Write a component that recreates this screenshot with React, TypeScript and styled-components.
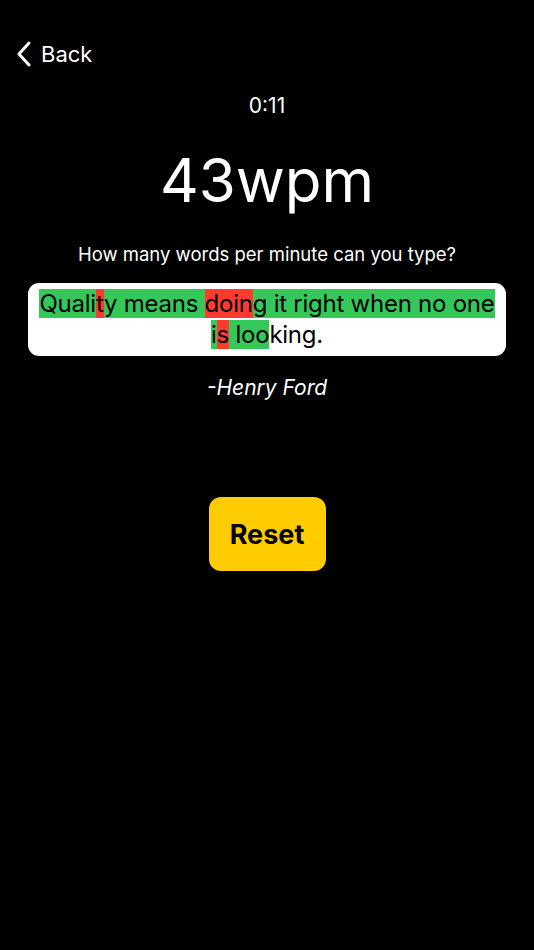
import styled, { createGlobalStyle } from "styled-components";

type Mark = "ok" | "bad" | "none";

const quote = "Quality means doing it right when no one is looking.";
const author = "-Henry Ford";

// typed state per character: which ones the user got right or wrong
const marks: Mark[] = quote.split("").map((_, i) => {
  if (i === 5) return "bad";
  if (i >= 14 && i <= 17) return "bad";
  if (i === 42) return "bad";
  if (i < 47) return "ok";
  return "none";
});

const GlobalStyle = createGlobalStyle`
  html, body {
    margin: 0;
    padding: 0;
    background: #000;
  }
  body {
    font-family: Inter, "Noto Sans", "Liberation Sans", sans-serif;
    color: #fff;
  }
`;

const Page = styled.div`
  width: 534px;
  min-height: 950px;
  background: #000;
  display: flex;
  flex-direction: column;
`;

const NavBar = styled.div`
  height: 44px;
  margin-top: 32px;
  padding: 0 16px;
  display: flex;
  align-items: center;
`;

const BackButton = styled.button`
  display: flex;
  align-items: center;
  gap: 9px;
  background: none;
  border: none;
  padding: 0;
  color: #fff;
  font-family: inherit;
  font-size: 22px;
  cursor: pointer;
`;

const Content = styled.main`
  display: flex;
  flex-direction: column;
  align-items: center;
`;

const Timer = styled.div`
  margin-top: 17px;
  font-size: 21px;
  line-height: 26px;
`;

const Speed = styled.div`
  margin-top: 25px;
  font-size: 60px;
  line-height: 72px;
  font-weight: 400;
`;

const Prompt = styled.div`
  margin-top: 26px;
  font-size: 18.5px;
  line-height: 24px;
`;

const QuoteCard = styled.div`
  margin-top: 17px;
  width: 478px;
  box-sizing: border-box;
  padding: 6px 6px;
  background: #fff;
  border-radius: 11px;
  color: #000;
  font-size: 24px;
  letter-spacing: -0.25px;
  line-height: 30.5px;
  text-align: center;
`;

const Char = styled.span<{ $mark: Mark }>`
  background: ${(p) =>
    p.$mark === "ok" ? "#34c759" : p.$mark === "bad" ? "#ff3b30" : "transparent"};
`;

const Author = styled.div`
  margin-top: 19px;
  font-size: 21px;
  line-height: 26px;
  font-style: italic;
`;

const ResetButton = styled.button`
  margin-top: 96px;
  width: 117px;
  height: 74px;
  border: none;
  border-radius: 12px;
  background: #ffcc00;
  color: #000;
  font-family: inherit;
  font-size: 27px;
  font-weight: 700;
  cursor: pointer;
`;

const ChevronLeft = () => (
  <svg width="16" height="26" viewBox="0 0 16 26" fill="none">
    <path
      d="M13 2 L3 13 L13 24"
      stroke="#fff"
      strokeWidth="3"
      strokeLinecap="round"
      strokeLinejoin="round"
    />
  </svg>
);

const App = () => {
  return (
    <Page>
      <GlobalStyle />
      <NavBar>
        <BackButton>
          <ChevronLeft />
          Back
        </BackButton>
      </NavBar>
      <Content>
        <Timer>0:11</Timer>
        <Speed>43wpm</Speed>
        <Prompt>How many words per minute can you type?</Prompt>
        <QuoteCard>
          {quote.split("").map((c, i) => (
            <Char key={i} $mark={marks[i]}>
              {c}
            </Char>
          ))}
        </QuoteCard>
        <Author>{author}</Author>
        <ResetButton>Reset</ResetButton>
      </Content>
    </Page>
  );
};

export default App;
